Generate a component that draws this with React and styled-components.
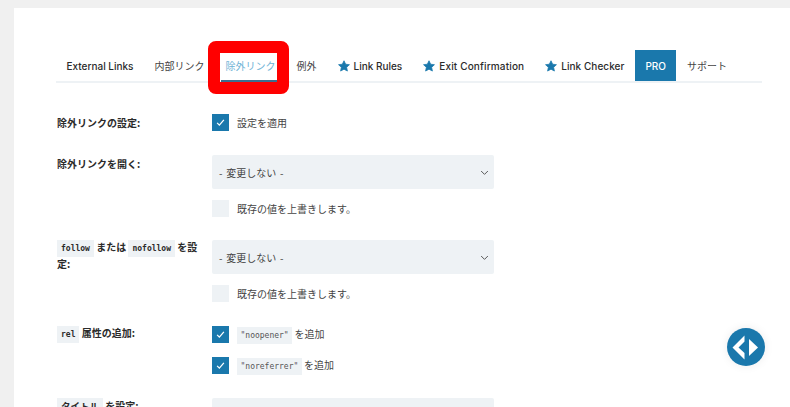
import React from 'react'
import styled, { createGlobalStyle } from 'styled-components'

const GlobalStyle = createGlobalStyle`
  html, body {
    margin: 0;
    height: 407px;
    overflow: hidden;
    background: #f0f0f0;
  }
`

const Panel = styled.div`
  box-sizing: border-box;
  height: 399px;
  margin: 8px 0 0 14px;
  padding: 42px 28px 0 42px;
  overflow: hidden;
  background: #fff;
  font-family: "Noto Sans CJK JP", "Noto Sans", sans-serif;
  font-size: 10px;
  color: #333;
`

const TabBar = styled.div`
  display: flex;
  height: 31px;
  border-bottom: 2px solid #eef2f5;
`

const Tab = styled.div`
  position: relative;
  display: flex;
  align-items: center;
  gap: 4px;
  height: 31px;
  padding: 0 10.5px;
  font-family: ${(p) => (p.$latin ? 'Inter, "Noto Sans", sans-serif' : 'inherit')};
  font-size: 10px;
  font-weight: ${(p) => (p.$latin ? 500 : 400)};
  letter-spacing: ${(p) => p.$spacing || 0}px;
  white-space: nowrap;
  color: ${(p) => (p.$pro ? '#fff' : p.$active ? '#6fb3d6' : p.$latin ? '#2b2b2b' : '#444')};
  background: ${(p) => (p.$pro ? '#1a78ac' : 'transparent')};
`

const Highlight = styled.span`
  position: absolute;
  left: -7px;
  top: -9px;
  width: 57px;
  height: 29px;
  border: 12px solid #ff0000;
  border-radius: 8px;
  pointer-events: none;
`

const ActiveLine = styled.span`
  position: absolute;
  left: 6px;
  right: 8px;
  bottom: -1px;
  height: 2px;
  background: #3c6e8f;
`

const Form = styled.div`
  display: flex;
  flex-direction: column;
  padding-top: 31px;
`

const Row = styled.div`
  display: grid;
  grid-template-columns: 156px 282px;
  margin-bottom: ${(p) => p.$gap}px;
`

const Label = styled.div`
  box-sizing: border-box;
  padding: ${(p) => p.$top || 0}px 6px 0 1px;
  font-weight: 700;
  font-size: 10px;
  line-height: 13px;
  color: #2b2b2b;
`

const Controls = styled.div`
  display: flex;
  flex-direction: column;
  gap: ${(p) => p.$gap || 11}px;
`

const Select = styled.div`
  display: flex;
  align-items: center;
  justify-content: space-between;
  box-sizing: border-box;
  height: 34px;
  padding: 0 5px 0 7px;
  border-radius: 2px;
  background: #eef2f5;
  color: #444;
  word-spacing: 1.5px;
`

const Check = styled.label`
  display: flex;
  align-items: center;
  gap: 8px;
  height: 17px;
  color: #444;
`

const Box = styled.span`
  display: flex;
  align-items: center;
  justify-content: center;
  width: 17px;
  height: 17px;
  background: ${(p) => (p.$on ? '#1a78ac' : '#eef2f5')};
`

const Code = styled.code`
  display: inline-block;
  padding: 0 ${(p) => (p.$light ? 3.5 : 4)}px;
  font-family: "DejaVu Sans Mono", "Noto Sans CJK JP", monospace;
  font-size: ${(p) => (p.$kana ? 9.5 : 8)}px;
  line-height: 17px;
  background: #eef2f5;
  color: ${(p) => (p.$light ? '#555' : '#2b2b2b')};
  font-weight: ${(p) => (p.$light ? 400 : 700)};
`

const Floating = styled.div`
  position: fixed;
  left: 727px;
  top: 328px;
  width: 38px;
  height: 38px;
  border-radius: 50%;
  background: #1a78ac;
  box-shadow: 0 0 10px rgba(0, 0, 0, 0.08);
`

const Star = () => (
  <svg width="12" height="12" viewBox="0 0 24 24" fill="#1a78ac">
    <path d="M12 1.500l3.300 6.900 7.600 1-5.600 5.200 1.500 7.500-6.800-3.700-6.800 3.700 1.500-7.500L1.100 9.400l7.600-1z" stroke="#1a78ac" strokeWidth="1.500" strokeLinejoin="round" />
  </svg>
)

const Tick = () => (
  <svg width="9" height="9" viewBox="0 0 12 12" fill="none" stroke="#fff" strokeWidth="1.700">
    <path d="M1.500 6.500l3 3 6-7" />
  </svg>
)

const Chevron = () => (
  <svg width="9" height="9" viewBox="0 0 12 12" fill="none" stroke="#555" strokeWidth="1.300">
    <path d="M1.500 4l4.500 4.500L10.500 4" />
  </svg>
)

const Option = ({ on, children }) => (
  <Check>
    <Box $on={on}>{on && <Tick />}</Box>
    <span>{children}</span>
  </Check>
)

const Dropdown = () => (
  <Select>
    <span>- 変更しない -</span>
    <Chevron />
  </Select>
)

const App = () => {
  return (
    <>
      <GlobalStyle />
      <Panel>
        <TabBar>
          <Tab $latin>External Links</Tab>
          <Tab>内部リンク</Tab>
          <Tab $active>
            除外リンク
            <ActiveLine />
            <Highlight />
          </Tab>
          <Tab>例外</Tab>
          <Tab $latin><Star />Link Rules</Tab>
          <Tab $latin $spacing={0.15}><Star />Exit Confirmation</Tab>
          <Tab $latin $spacing={0.05}><Star />Link Checker</Tab>
          <Tab $latin $pro>PRO</Tab>
          <Tab>サポート</Tab>
        </TabBar>
        <Form>
          <Row $gap={24}>
            <Label $top={2}>除外リンクの設定:</Label>
            <Option on>設定を適用</Option>
          </Row>
          <Row $gap={23}>
            <Label $top={2}>除外リンクを開く:</Label>
            <Controls>
              <Dropdown />
              <Option>既存の値を上書きします。</Option>
            </Controls>
          </Row>
          <Row $gap={24}>
            <Label><Code>follow</Code> または <Code>nofollow</Code> を設定:</Label>
            <Controls>
              <Dropdown />
              <Option>既存の値を上書きします。</Option>
            </Controls>
          </Row>
          <Row $gap={24}>
            <Label><Code>rel</Code> 属性の追加:</Label>
            <Controls $gap={14}>
              <Option on><Code $light>"noopener"</Code> を追加</Option>
              <Option on><Code $light>"noreferrer"</Code> を追加</Option>
            </Controls>
          </Row>
          <Row $gap={0}>
            <Label><Code $kana>タイトル</Code> を設定:</Label>
            <Dropdown />
          </Row>
        </Form>
      </Panel>
      <Floating>
        <svg width="38" height="38" viewBox="0 0 38 38" fill="#fff">
          <path d="M17.500 7.500L5.500 19.500l12 12V25l-6-5.500 6-6z" />
          <path d="M22 11v17l9-8.500z" />
        </svg>
      </Floating>
    </>
  )
}

export default App
